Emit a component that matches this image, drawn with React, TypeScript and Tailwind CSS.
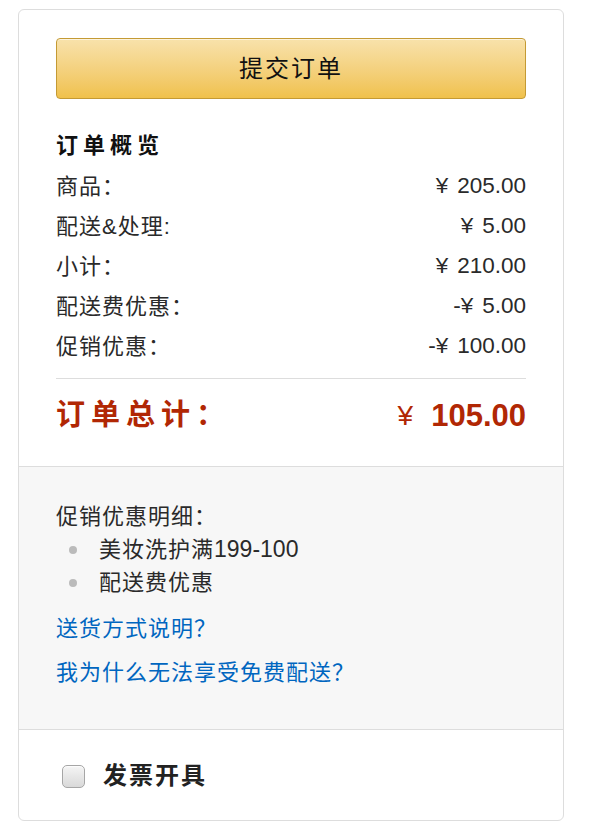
import React from "react";

const font = { fontFamily: '"Liberation Sans", Arial, "Noto Sans CJK SC", sans-serif' };

function Row({ label, value, neg }: { label: string; value: string; neg?: boolean }) {
  return (
    <div className="flex h-[40px] items-center justify-between text-[#2a2a2a]">
      <span className="text-[22px] tracking-[1px]">{label}</span>
      <span className="text-[22.5px]">
        {neg ? "-" : ""}¥<span className="ml-[9px]">{value}</span>
      </span>
    </div>
  );
}

export default function App() {
  return (
    <div className="min-h-[834px] bg-white pt-[9px]" style={font}>
      <div className="ml-[18px] w-[546px] rounded-[6px] border border-[#dddddd] bg-white overflow-hidden">
        <div className="px-[37px] pt-[28px] pb-[30px]">
          <button className="flex h-[61px] w-full items-center justify-center rounded-[4px] border border-[#c49a34] bg-gradient-to-b from-[#f8e2ab] to-[#f0c14b] text-[24px] tracking-[2px] text-[#111] shadow-[inset_0_1px_0_rgba(255,255,255,0.6)]">
            提交订单
          </button>
          <div className="mt-[31px] flex h-[30px] items-center text-[22px] font-bold tracking-[5px] text-[#111]">订单概览</div>
          <div className="mt-[6px]">
            <Row label="商品：" value="205.00" />
            <Row label="配送&处理:" value="5.00" />
            <Row label="小计：" value="210.00" />
            <Row label="配送费优惠：" value="5.00" neg />
            <Row label="促销优惠：" value="100.00" neg />
          </div>
          <div className="mt-[12px] h-px bg-[#dddddd]" />
          <div className="mt-[17px] flex h-[40px] items-center justify-between font-bold text-[#b12704]">
            <span className="text-[29px] tracking-[6px]">订单总计：</span>
            <span className="flex items-center">
              <span className="text-[28px] font-normal">¥</span>
              <span className="ml-[18px] text-[31px]">105.00</span>
            </span>
          </div>
        </div>
        <div className="border-t border-[#dddddd] bg-[#f7f7f7] px-[37px] pt-[33px] pb-[41px] text-[22px] tracking-[1px]">
          <div className="flex h-[33px] items-center text-[#2a2a2a]">促销优惠明细：</div>
          <ul className="text-[#2a2a2a]">
            <li className="flex h-[33px] items-center">
              <span className="ml-[13px] mr-[22px] h-[8px] w-[8px] rounded-full bg-[#bbbbbb]" />
              <span>美妆洗护满<span className="text-[23px] tracking-normal">199-100</span></span>
            </li>
            <li className="flex h-[33px] items-center">
              <span className="ml-[13px] mr-[22px] h-[8px] w-[8px] rounded-full bg-[#bbbbbb]" />
              配送费优惠
            </li>
          </ul>
          <div className="mt-[13px] flex h-[32px] items-center text-[#0066c0]">送货方式说明？</div>
          <div className="mt-[12px] flex h-[32px] items-center text-[#0066c0]">我为什么无法享受免费配送？</div>
        </div>
        <div className="border-t border-[#dddddd] px-[43px] pt-[30px] pb-[28px]">
          <label className="flex h-[32px] items-center">
            <span className="h-[23px] w-[23px] rounded-[5px] border border-[#a6a6a6] bg-gradient-to-b from-[#f5f5f5] to-[#d9d9d9] shadow-[inset_0_1px_1px_rgba(255,255,255,0.8)]" />
            <span className="ml-[18px] text-[24px] font-bold tracking-[2px] text-[#222]">发票开具</span>
          </label>
        </div>
      </div>
    </div>
  );
}
